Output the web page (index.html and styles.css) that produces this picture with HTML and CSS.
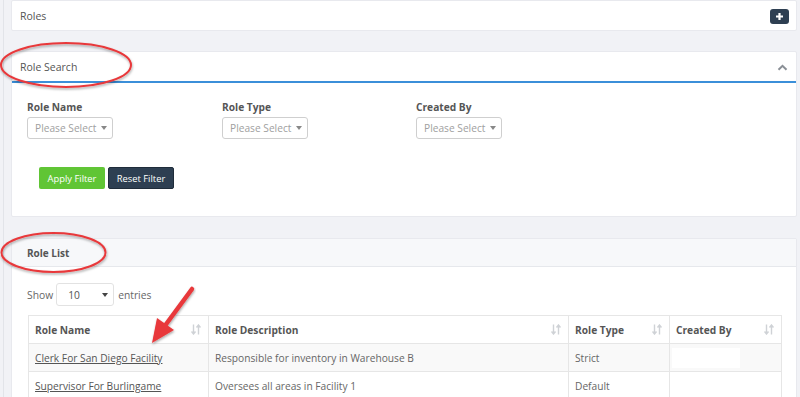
FILE: index.html
```html
<!DOCTYPE html>
<html>
<head>
<meta charset="utf-8">
<link rel="stylesheet" href="styles.css">
</head>
<body>
<div class="page">
  <div class="card card-roles">
    <div class="title">Roles</div>
    <button class="btn-add" aria-label="Add">
      <svg width="9" height="9" viewBox="0 0 9 9"><path d="M4.5 1v7M1 4.5h7" stroke="#fff" stroke-width="2.2" stroke-linecap="butt"/></svg>
    </button>
  </div>

  <div class="card card-search">
    <div class="search-head">
      <div class="title">Role Search</div>
      <svg class="chev" width="11" height="7" viewBox="0 0 11 7"><path d="M1.5 5.8L5.5 1.8l4 4" fill="none" stroke="#8a8f96" stroke-width="2"/></svg>
    </div>
    <div class="search-body">
      <div class="filters">
        <div class="field">
          <div class="label">Role Name</div>
          <div class="select"><span>Please Select</span><i class="caret"></i></div>
        </div>
        <div class="field">
          <div class="label">Role Type</div>
          <div class="select"><span>Please Select</span><i class="caret"></i></div>
        </div>
        <div class="field">
          <div class="label">Created By</div>
          <div class="select"><span>Please Select</span><i class="caret"></i></div>
        </div>
      </div>
      <div class="actions">
        <button class="btn btn-apply">Apply Filter</button>
        <button class="btn btn-reset">Reset Filter</button>
      </div>
    </div>
  </div>

  <div class="card card-list">
    <div class="list-head">Role List</div>
    <div class="list-body">
      <div class="show">
        <span>Show</span>
        <div class="len"><span>10</span><i class="caret dark"></i></div>
        <span>entries</span>
      </div>
      <table class="grid">
        <colgroup><col class="c1"><col class="c2"><col class="c3"><col class="c4"></colgroup>
        <thead>
          <tr>
            <th><div class="th">Role Name<svg class="sort" width="10" height="11" viewBox="0 0 10 11"><path d="M2.5 0.5v9M0.5 7.5l2 2.5 2-2.5M7.5 10.5v-9M5.5 3.5l2-2.5 2 2.5" fill="none" stroke="#cfd2d6" stroke-width="1.4"/></svg></div></th>
            <th><div class="th">Role Description<svg class="sort" width="10" height="11" viewBox="0 0 10 11"><path d="M2.5 0.5v9M0.5 7.5l2 2.5 2-2.5M7.5 10.5v-9M5.5 3.5l2-2.5 2 2.5" fill="none" stroke="#cfd2d6" stroke-width="1.4"/></svg></div></th>
            <th><div class="th">Role Type<svg class="sort" width="10" height="11" viewBox="0 0 10 11"><path d="M2.5 0.5v9M0.5 7.5l2 2.5 2-2.5M7.5 10.5v-9M5.5 3.5l2-2.5 2 2.5" fill="none" stroke="#cfd2d6" stroke-width="1.4"/></svg></div></th>
            <th><div class="th">Created By<svg class="sort" width="10" height="11" viewBox="0 0 10 11"><path d="M2.5 0.5v9M0.5 7.5l2 2.5 2-2.5M7.5 10.5v-9M5.5 3.5l2-2.5 2 2.5" fill="none" stroke="#cfd2d6" stroke-width="1.4"/></svg></div></th>
          </tr>
        </thead>
        <tbody>
          <tr class="odd">
            <td><a href="#">Clerk For San Diego Facility</a></td>
            <td>Responsible for inventory in Warehouse B</td>
            <td>Strict</td>
            <td class="redact"><div class="blank"></div></td>
          </tr>
          <tr>
            <td><a href="#">Supervisor For Burlingame</a></td>
            <td>Oversees all areas in Facility 1</td>
            <td>Default</td>
            <td></td>
          </tr>
        </tbody>
      </table>
    </div>
  </div>
</div>

<svg class="annot" width="800" height="397" viewBox="0 0 800 397">
  <defs>
    <filter id="sh" x="-10%" y="-10%" width="120%" height="130%">
      <feDropShadow dx="0.5" dy="1.5" stdDeviation="1.2" flood-color="#000" flood-opacity="0.35"/>
    </filter>
  </defs>
  <g filter="url(#sh)" fill="none" stroke="#e8393b" stroke-width="2">
    <ellipse cx="66" cy="65" rx="65" ry="22"/>
    <ellipse cx="53.5" cy="252.5" rx="52" ry="19.5"/>
  </g>
  <g filter="url(#sh)">
    <path d="M192 289L164 327" stroke="#e8393b" stroke-width="4.5" stroke-linecap="round"/>
    <path d="M152 343L157 318L174 330Z" fill="#e8393b"/>
  </g>
</svg>
</body>
</html>
```

FILE: styles.css
```css
* { box-sizing: border-box; }
html, body { margin: 0; padding: 0; }
body {
  background: #f1f2f6;
  font-family: "Open Sans", "Liberation Sans", sans-serif;
  font-size: 10.3px;
  color: #555;
  width: 800px;
  height: 397px;
  overflow: hidden;
  position: relative;
}
.page {
  margin-left: 3px;
  border-left: 1px solid #e2e4e9;
  padding: 0 3px 0 7px;
  min-height: 397px;
}
.card {
  background: #fff;
  border: 1px solid #e8e9ee;
  border-radius: 2px;
}
.title { font-size: 10.5px; color: #555; }

.card-roles {
  height: 31px;
  display: flex;
  align-items: center;
  justify-content: space-between;
  padding: 0 7px 0 8px;
}
.btn-add {
  width: 19px;
  height: 15px;
  border: 0;
  border-radius: 3px;
  background: #2e3f52;
  display: flex;
  align-items: center;
  justify-content: center;
  padding: 0;
  margin-top: 1px;
}

.card-search { margin-top: 20px; }
.search-head {
  height: 31px;
  border-bottom: 2px solid #3b8fd9;
  display: flex;
  align-items: center;
  justify-content: space-between;
  padding: 0 8px 0 8px;
}
.chev { margin-top: 2px; }
.search-body {
  height: 133px;
  padding: 17px 15px 0 15px;
}
.filters { display: flex; }
.field { width: 195px; }
.field:nth-child(2) { width: 194px; }
.label {
  font-weight: 700;
  font-size: 10.2px;
  color: #555;
  height: 17px;
  line-height: 15px;
}
.select {
  width: 86px;
  height: 22px;
  border: 1px solid #cfcfcf;
  border-radius: 3px;
  display: flex;
  align-items: center;
  justify-content: space-between;
  padding: 0 5px 0 7px;
  color: #a0a0a0;
  font-size: 10.2px;
  white-space: nowrap;
}
.caret {
  width: 0; height: 0;
  border-left: 3.5px solid transparent;
  border-right: 3.5px solid transparent;
  border-top: 4px solid #888;
}
.caret.dark { border-top-color: #444; }
.actions {
  display: flex;
  gap: 3px;
  margin-top: 28px;
  padding-left: 12px;
}
.btn {
  height: 22px;
  width: 66px;
  border: 0;
  border-radius: 2px;
  color: #fff;
  font-family: "Open Sans", "Liberation Sans", sans-serif;
  font-size: 9.4px;
  padding: 0;
}
.btn-apply { background: #60c535; }
.btn-reset { background: #2e3f52; border: 1px solid #1f2c3a; }

.card-list { margin-top: 21px; min-height: 170px; }
.list-head {
  height: 28px;
  background: #f7f8fa;
  border-bottom: 1px solid #e6e8ec;
  display: flex;
  align-items: center;
  padding-left: 15px;
  font-weight: 700;
  font-size: 10px;
  color: #555;
}
.list-body { padding: 16px 15px 0 15px; }
.show {
  display: flex;
  align-items: center;
  height: 23px;
  color: #666;
}
.len {
  width: 58px;
  height: 23px;
  margin: 0 4px 0 3px;
  border: 1px solid #e2e2e2;
  border-radius: 3px;
  display: flex;
  align-items: center;
  justify-content: space-between;
  padding: 0 5px 0 11px;
  color: #555;
}
.grid {
  margin-top: 9px;
  margin-left: 1px;
  width: 753px;
  border-collapse: collapse;
  table-layout: fixed;
}
.c1 { width: 180px; }
.c2 { width: 360px; }
.c3 { width: 101px; }
.c4 { width: 112px; }
.grid th, .grid td {
  border: 1px solid #e6e6e6;
  height: 28px;
  padding: 0 6px;
  text-align: left;
  font-size: 10.2px;
  white-space: nowrap;
}
.grid th { font-weight: 700; color: #555; }
.th {
  display: flex;
  align-items: center;
  justify-content: space-between;
}
.sort { margin-right: 1px; }
.grid td { color: #666; }
.grid tr.odd td { background: #f9f9f9; }
.grid a { color: #555; text-decoration: underline; }
.grid td.redact { padding: 0 2px; }
.blank { width: 68px; height: 20px; background: #fff; }

.annot {
  position: absolute;
  left: 0;
  top: 0;
  pointer-events: none;
}
```
